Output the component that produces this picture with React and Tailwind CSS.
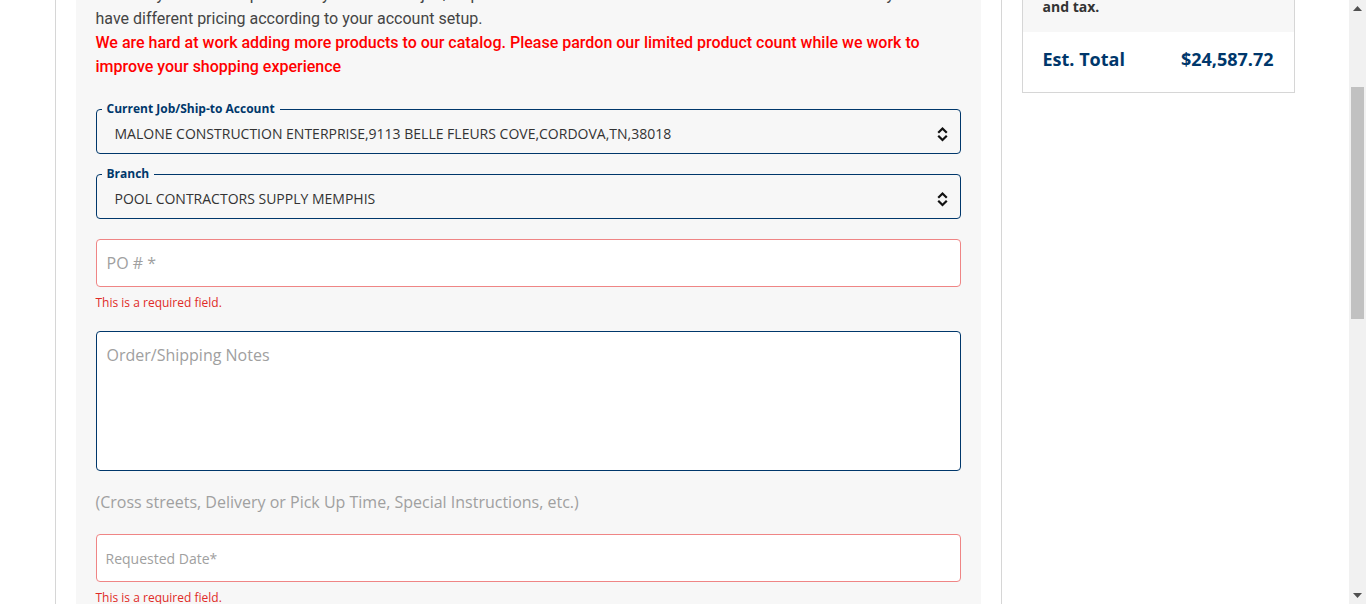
import React from 'react';

const NAVY = 'border-[#00376b]';

const Chevrons = () => (
  <svg width="11" height="20" viewBox="0 0 11 20" fill="none" stroke="#111" strokeWidth="2.2" strokeLinecap="square">
    <path d="M2 8 L5.5 4.5 L9 8" />
    <path d="M2 12.5 L5.5 16 L9 12.5" />
  </svg>
);

const SelectField = ({ label, value, className = '' }) => (
  <fieldset className={`border ${NAVY} rounded-[4px] p-0 m-0 min-w-0 ${className}`}>
    <legend className="ml-[5px] px-[5px] text-[12px] leading-4 font-bold text-[#00376b]">{label}</legend>
    <div className="flex items-center justify-between h-[39px] -mt-[3px] pl-[18px] pr-3 text-[14px] text-[#333] uppercase">
      <span>{value}</span>
      <Chevrons />
    </div>
  </fieldset>
);

const ErrorText = ({ className = '' }) => (
  <p className={`text-[12px] leading-4 text-[#e02b27] ${className}`}>This is a required field.</p>
);

const Scrollbar = () => (
  <div className="w-[17px] h-full bg-[#f1f1f1] flex flex-col shrink-0">
    <div className="h-[17px] flex items-center justify-center">
      <svg width="9" height="5" viewBox="0 0 9 5"><polygon points="0,5 9,5 4.5,0" fill="#505050" /></svg>
    </div>
    <div className="flex-1">
      <div className="mt-[70px] h-[232px] mx-[2px] bg-[#c1c1c1]" />
    </div>
    <div className="h-[17px] flex items-center justify-center">
      <svg width="9" height="5" viewBox="0 0 9 5"><polygon points="0,0 9,0 4.5,5" fill="#505050" /></svg>
    </div>
  </div>
);

export default function App() {
  return (
    <div className="flex h-[604px] w-full overflow-hidden bg-white font-['Open_Sans',sans-serif]">
      <div className="flex-1 min-w-0">
        <div className="w-[1240px] mx-auto flex items-start -mt-[60px] min-h-[760px]">
          {/* main column */}
          <div className="w-[947px] self-stretch border-x border-[#d6d6d6] shrink-0">
            <div className="mx-5 w-[905px] h-full bg-[#f7f7f7] px-5 pt-[43px] pb-10">
              <p className="font-['Roboto',sans-serif] text-[16px] leading-6 text-[#444]">
                <span className="block whitespace-nowrap">Items in your cart are priced for your selected job/ship-to account and branch. Other accounts and branches may</span>
                have different pricing according to your account setup.
              </p>
              <p className="font-['Roboto',sans-serif] font-medium text-[16px] leading-6 text-[#ff0000]">
                We are hard at work adding more products to our catalog. Please pardon our limited product count while we work to improve your shopping experience
              </p>

              <SelectField
                className="mt-[22px]"
                label="Current Job/Ship-to Account"
                value="Malone Construction Enterprise,9113 Belle Fleurs Cove,Cordova,TN,38018"
              />
              <SelectField className="mt-3" label="Branch" value="Pool Contractors Supply Memphis" />

              <div className="mt-5 h-[48px] border border-[#ef8585] rounded-[4px] bg-white flex items-center pl-[10px] text-[16px] text-[#a0a0a0]">
                PO # *
              </div>
              <ErrorText className="mt-2" />

              <div className={`mt-5 h-[140px] border ${NAVY} rounded-[4px] bg-white pl-[10px] pt-[11px] text-[16px] leading-6 text-[#a0a0a0]`}>
                Order/Shipping Notes
              </div>

              <p className="mt-[19px] text-[16px] leading-6 text-[#a0a0a0]">
                (Cross streets, Delivery or Pick Up Time, Special Instructions, etc.)
              </p>

              <div className="mt-5 h-[48px] border border-[#ef8585] rounded-[4px] bg-white flex items-center pl-[9px] text-[14px] text-[#a0a0a0]">
                Requested Date*
              </div>
              <ErrorText className="mt-2" />
            </div>
          </div>

          {/* sidebar */}
          <div className="ml-5 w-[273px] mt-4 border border-[#d6d6d6] shrink-0">
            <div className="bg-[#f7f7f7] px-5 pt-5 pb-[15px]">
              <p className="text-[14px] leading-5 font-bold text-[#333]">
                Order total excludes shipping<br />and tax.
              </p>
            </div>
            <div className="bg-white px-5 pt-[15px] pb-5 flex items-center justify-between text-[18px] leading-[25px] font-bold text-[#00376b]">
              <span>Est. Total</span>
              <span>$24,587.72</span>
            </div>
          </div>
        </div>
      </div>
      <Scrollbar />
    </div>
  );
}
